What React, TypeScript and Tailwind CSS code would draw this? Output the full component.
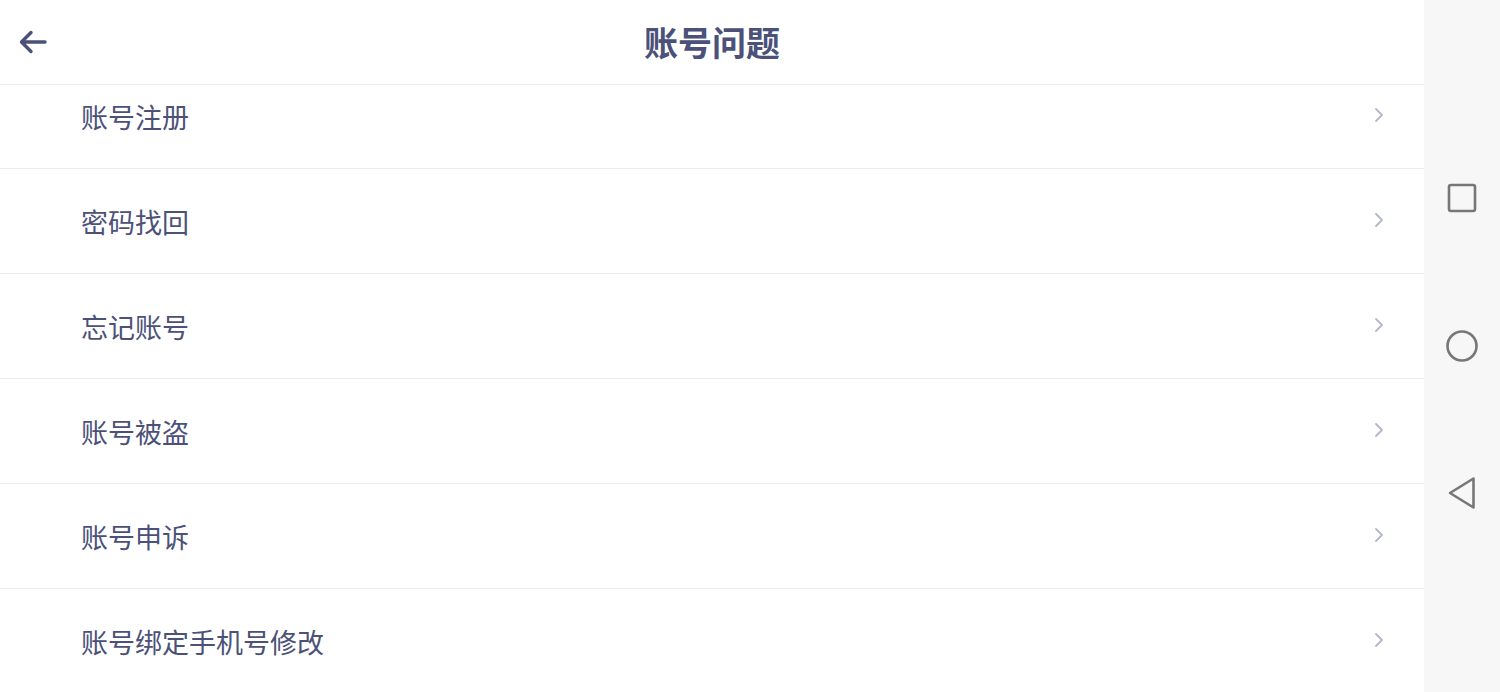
import React from "react";

const items = ["账号注册", "密码找回", "忘记账号", "账号被盗", "账号申诉", "账号绑定手机号修改"];

export default function App() {
  return (
    <div
      className="flex h-[692px] w-[1500px] overflow-hidden bg-white"
      style={{ fontFamily: '"Noto Sans CJK SC", "Noto Sans", sans-serif' }}
    >
      <div className="flex w-[1424px] flex-col">
        <div className="relative z-10 flex h-[85px] shrink-0 items-center justify-center border-b border-[#ececf0] bg-white">
          <svg className="absolute left-[17px] top-[28px]" width="32" height="28" viewBox="0 0 32 28" fill="none">
            <path d="M28 14H5M14 4.5L4.5 14L14 23.5" stroke="#4b5178" strokeWidth="3.4" strokeLinecap="round" strokeLinejoin="round" />
          </svg>
          <span className="text-[34px] font-bold leading-none text-[#4b5178]">账号问题</span>
        </div>
        <div className="flex-1 overflow-hidden">
          <div className="-mt-[21px]">
            {items.map((t) => (
              <div key={t} className="flex h-[105px] items-center justify-between border-b border-[#ececf0] pl-[81px] pr-[40px]">
                <span className="text-[27px] leading-none text-[#4b5178]">{t}</span>
                <svg width="10" height="16" viewBox="0 0 10 16" fill="none" className="-mt-[3px]">
                  <path d="M2 2L8 8L2 14" stroke="#b3b7c9" strokeWidth="1.8" strokeLinecap="round" strokeLinejoin="round" />
                </svg>
              </div>
            ))}
          </div>
        </div>
      </div>
      <div className="flex w-[76px] flex-col items-center bg-[#f7f7f7]">
        <svg className="mt-[183px]" width="30" height="30" viewBox="0 0 30 30" fill="none">
          <rect x="2" y="2" width="26" height="26" rx="2" stroke="#777777" strokeWidth="2.6" />
        </svg>
        <svg className="mt-[116px]" width="34" height="34" viewBox="0 0 34 34" fill="none">
          <circle cx="17" cy="17" r="14.5" stroke="#777777" strokeWidth="2.6" />
        </svg>
        <svg className="mt-[112px]" width="32" height="36" viewBox="0 0 32 36" fill="none">
          <path d="M27.5 3.5L27.5 32.5L4 18Z" stroke="#777777" strokeWidth="2.6" strokeLinejoin="round" />
        </svg>
      </div>
    </div>
  );
}
